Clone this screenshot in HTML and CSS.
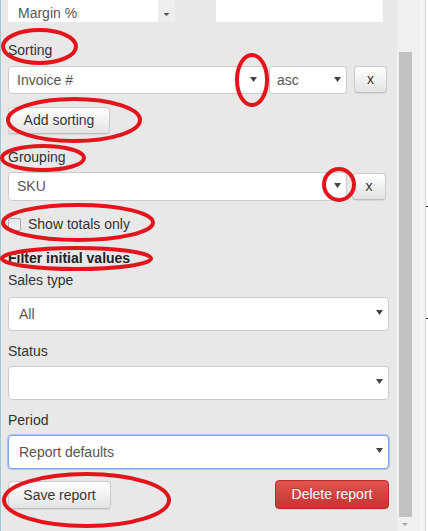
FILE: index.html
```html
<!DOCTYPE html>
<html>
<head>
<meta charset="utf-8">
<title>Report settings</title>
<link rel="stylesheet" href="styles.css">
</head>
<body>
<div class="frame">
  <div class="panel">
    <div class="top-row">
      <div class="mini-select"><span class="mini-text">Margin %</span><span class="mini-arrow"><i class="mini-caret"></i></span></div>
      <div class="mini-box"></div>
    </div>

    <div class="label lbl-sorting">Sorting</div>
    <div class="row row-sorting">
      <div class="select sel-sort"><span class="sel-text">Invoice #</span><i class="caret"></i></div>
      <div class="select sel-dir"><span class="sel-text">asc</span><i class="caret"></i></div>
      <button class="btn btn-x btn-x-sort">x</button>
    </div>
    <button class="btn btn-add">Add sorting</button>

    <div class="label lbl-grouping">Grouping</div>
    <div class="row row-grouping">
      <div class="select sel-group"><span class="sel-text">SKU</span><i class="caret"></i></div>
      <button class="btn btn-x btn-x-group">x</button>
    </div>

    <label class="check"><span class="box"></span><span>Show totals only</span></label>

    <div class="heading">Filter initial values</div>

    <div class="label lbl-sales">Sales type</div>
    <div class="select select-lg sel-sales"><span class="sel-text">All</span><i class="caret"></i></div>

    <div class="label lbl-follow">Status</div>
    <div class="select select-lg"><span class="sel-text"></span><i class="caret"></i></div>

    <div class="label lbl-follow">Period</div>
    <div class="select select-lg focus"><span class="sel-text">Report defaults</span><i class="caret"></i></div>

    <div class="actions">
      <button class="btn btn-save">Save report</button>
      <button class="btn btn-danger">Delete report</button>
    </div>
  </div>

  <div class="scrollbar">
    <div class="thumb"></div>
    <div class="down"></div>
  </div>

  <div class="edge"></div>
  <div class="edge-line"></div>
  <div class="edge-end">
    <div class="tick tick-1"></div>
    <div class="tick tick-2"></div>
  </div>
</div>

<svg class="marks" width="428" height="531" viewBox="0 0 428 531" aria-hidden="true">
  <g fill="none" stroke="#e3141c" stroke-width="4">
    <ellipse cx="39.5" cy="46.5" rx="36.5" ry="16.5"/>
    <ellipse cx="252" cy="80" rx="15" ry="25"/>
    <ellipse cx="74" cy="120" rx="66" ry="21"/>
    <ellipse cx="43" cy="158" rx="41" ry="12"/>
    <ellipse cx="339" cy="184.5" rx="15" ry="15.5"/>
    <ellipse cx="78" cy="222.5" rx="75" ry="17.5"/>
    <ellipse cx="76.5" cy="258.5" rx="74.5" ry="10.5"/>
    <ellipse cx="86.5" cy="500" rx="82.5" ry="26"/>
  </g>
</svg>
</body>
</html>
```

FILE: styles.css
```css
html, body {
  margin: 0;
  padding: 0;
}

body {
  width: 428px;
  height: 531px;
  overflow: hidden;
  position: relative;
  background: #ffffff;
  font-family: "Liberation Sans", Arial, sans-serif;
  font-size: 14px;
  color: #333333;
}

.frame {
  display: flex;
  height: 531px;
}

/* ---------- panel ---------- */
.panel {
  box-sizing: border-box;
  width: 397px;
  height: 531px;
  flex: none;
  background: #e8e8e8;
  border-left: 1px solid #9fcad2;
  padding: 0 8px 0 7px;
  display: flex;
  flex-direction: column;
  align-items: flex-start;
}

.top-row {
  display: flex;
  height: 22px;
  width: 100%;
}

.mini-select {
  display: flex;
  width: 167px;
  height: 22px;
}

.mini-text {
  box-sizing: border-box;
  width: 150px;
  height: 22px;
  background: #ffffff;
  color: #555555;
  padding: 5px 0 0 10px;
  line-height: 16px;
  overflow: hidden;
}

.mini-arrow {
  width: 17px;
  height: 22px;
  background: #eeeeee;
  display: flex;
  justify-content: center;
  padding-top: 13px;
  box-sizing: border-box;
}

.mini-caret {
  display: block;
  width: 6px;
  height: 3px;
  background: #555555;
  clip-path: polygon(0 0, 100% 0, 50% 100%);
}

.mini-box {
  width: 167px;
  height: 22px;
  margin-left: 41px;
  background: #ffffff;
}

.label {
  line-height: 20px;
  height: 20px;
  color: #333333;
}

.lbl-sorting { margin-top: 18px; }
.lbl-grouping { margin-top: 13px; }
.lbl-sales { margin-top: 2px; }
.lbl-follow { margin-top: 10px; }

.row {
  display: flex;
  align-items: flex-start;
}

.row-sorting { margin-top: 6px; }
.row-grouping { margin-top: 5px; }

/* ---------- selects ---------- */
.select {
  position: relative;
  box-sizing: border-box;
  background: #ffffff;
  border: 1px solid #cccccc;
  border-radius: 4px;
  color: #555555;
  flex: none;
}

.sel-text {
  display: block;
  white-space: nowrap;
}

.caret {
  position: absolute;
  width: 7px;
  height: 5px;
  background: #444444;
  clip-path: polygon(0 0, 100% 0, 50% 100%);
}

.sel-sort {
  width: 259px;
  height: 28px;
}
.sel-sort .sel-text { line-height: 26px; padding-left: 8px; }
.sel-sort .caret { right: 9px; top: 10px; }

.sel-dir {
  width: 78px;
  height: 28px;
  margin-left: 2px;
}
.sel-dir .sel-text { line-height: 26px; padding-left: 7px; }
.sel-dir .caret { right: 5px; top: 10px; }

.sel-group {
  width: 339px;
  height: 29px;
}
.sel-group .sel-text { line-height: 27px; padding-left: 8px; }
.sel-group .caret { right: 5px; top: 10px; }

.select-lg {
  width: 381px;
  height: 34px;
  margin-top: 5px;
}
.select-lg .sel-text { line-height: 32px; padding-left: 10px; height: 32px; }
.select-lg .caret { right: 5px; top: 12px; }

.sel-sales { margin-top: 7px; }

.select-lg.focus {
  border-color: #7fa6ea;
  box-shadow: 0 0 0 1px rgba(120, 160, 235, 0.55);
}

/* ---------- buttons ---------- */
.btn {
  box-sizing: border-box;
  margin: 0;
  padding: 0;
  font-family: inherit;
  font-size: 14px;
  color: #333333;
  background: linear-gradient(to bottom, #ffffff 0%, #e3e3e3 100%);
  border: 1px solid #cccccc;
  border-bottom-color: #bdbdbd;
  border-radius: 4px;
  box-shadow: 0 1px 1px rgba(0, 0, 0, 0.08);
  text-shadow: 0 1px 0 #ffffff;
  text-align: center;
  flex: none;
}

.btn-x {
  height: 27px;
  line-height: 25px;
}
.btn-x-sort { width: 33px; margin-left: 7px; }
.btn-x-group { width: 34px; margin-left: 5px; margin-top: 1px; }

.btn-add {
  width: 102px;
  height: 27px;
  line-height: 25px;
  margin-top: 13px;
}

.actions {
  display: flex;
  justify-content: space-between;
  width: 100%;
  margin-top: 12px;
}

.btn-save {
  width: 103px;
  height: 28px;
  line-height: 26px;
}

.btn-danger {
  width: 114px;
  height: 29px;
  line-height: 27px;
  margin-top: -1px;
  color: #ffffff;
  background: linear-gradient(to bottom, #e1534e 0%, #c43531 100%);
  border-color: #b92c28;
  text-shadow: 0 -1px 0 rgba(0, 0, 0, 0.2);
}

/* ---------- checkbox ---------- */
.check {
  display: flex;
  align-items: center;
  height: 20px;
  line-height: 20px;
  margin-top: 13px;
  color: #333333;
}

.box {
  box-sizing: border-box;
  width: 13px;
  height: 13px;
  margin-right: 7px;
  border: 1px solid #a8a8a8;
  border-radius: 2px;
  background: linear-gradient(to bottom, #e4e4e4, #f4f4f4);
}

.heading {
  font-weight: bold;
  line-height: 20px;
  height: 20px;
  margin-top: 14px;
  color: #222222;
}

/* ---------- scrollbar & edge ---------- */
.scrollbar {
  width: 23px;
  height: 531px;
  flex: none;
  background: #f0f0f0;
  display: flex;
  flex-direction: column;
}

.thumb {
  width: 13px;
  height: 465px;
  margin: 52px 0 0 2px;
  background: #c1c1c1;
}

.down {
  width: 6px;
  height: 3px;
  margin: 6px 0 0 5px;
  background: #a3a3a3;
  clip-path: polygon(0 0, 100% 0, 50% 100%);
}

.edge {
  width: 5px;
  flex: none;
  background: #f5f5f5;
}

.edge-line {
  width: 1px;
  flex: none;
  background: #d6d6d6;
}

.edge-end {
  width: 2px;
  flex: none;
  background: #ffffff;
  display: flex;
  flex-direction: column;
}

.tick {
  height: 1px;
  background: #222222;
}
.tick-1 { margin-top: 206px; }
.tick-2 { margin-top: 111px; }

/* ---------- annotation overlay ---------- */
.marks {
  position: absolute;
  left: 0;
  top: 0;
  pointer-events: none;
}
```
